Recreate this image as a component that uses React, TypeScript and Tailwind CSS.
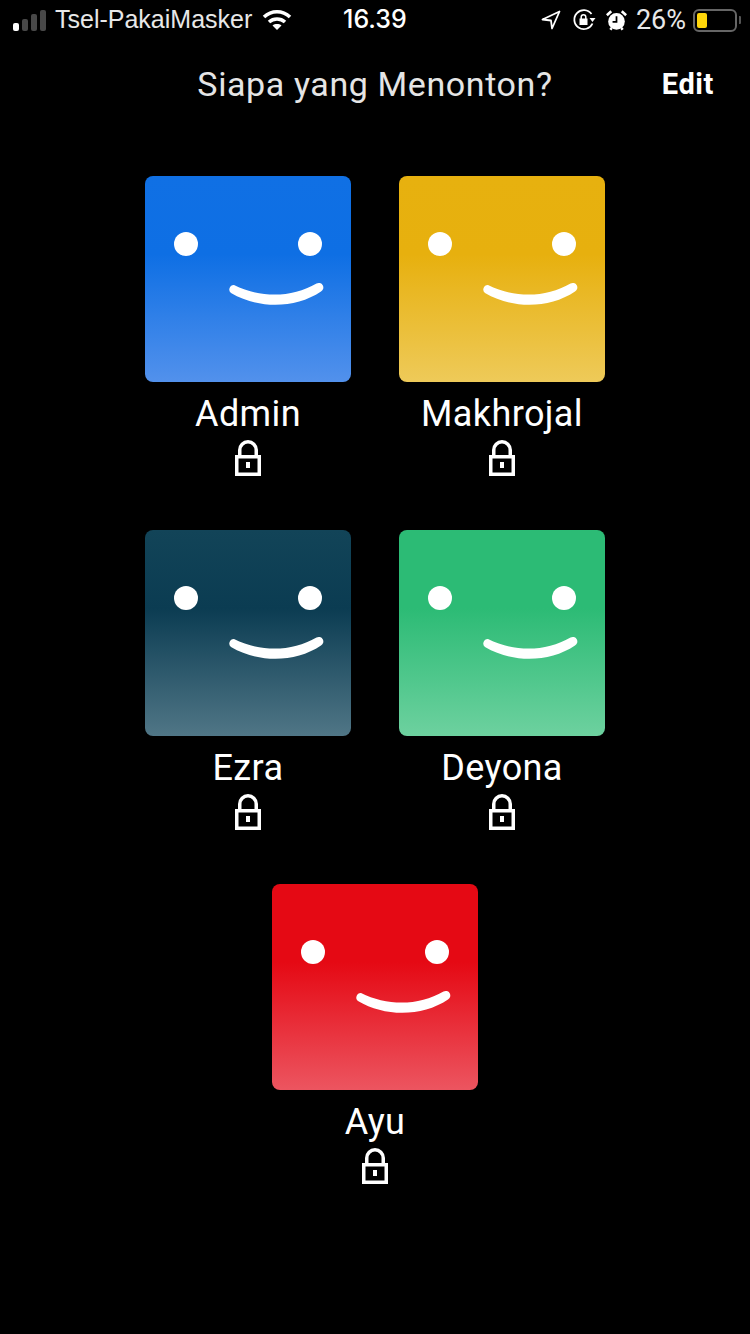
import React from 'react';

const Smile: React.FC = () => (
  <svg viewBox="0 0 206 206" className="w-full h-full">
    <circle cx="41" cy="68" r="12" fill="#fff" />
    <circle cx="165" cy="68" r="12" fill="#fff" />
    <path d="M89 109 C115 122 147 122 171.500 107.500 A4.500 4.500 0 0 1 176 115.500 C150 133 113 133 86 117 A4.500 4.500 0 0 1 89 109 Z" fill="#fff" />
  </svg>
);

const Lock: React.FC = () => (
  <svg viewBox="0 0 26 36" className="w-[26px] h-[36px]" fill="none" stroke="#fff" strokeWidth="3.5">
    <rect x="1.75" y="16.75" width="22.5" height="17.5" />
    <path d="M4.75 16 V10 a8.25 8.25 0 0 1 16.5 0 V16" />
    <rect x="11" y="22" width="4" height="6" fill="#fff" stroke="none" />
  </svg>
);

interface ProfileProps {
  name: string;
  gradient: string;
}

const Profile: React.FC<ProfileProps> = ({ name, gradient }) => (
  <div className="w-[206px] flex flex-col items-center">
    <div className={`w-[206px] h-[206px] rounded-[8px] overflow-hidden ${gradient}`}>
      <Smile />
    </div>
    <div className="mt-[12px] h-[40px] leading-[40px] text-[36px] tracking-[0.4px] text-white font-['Roboto',sans-serif] whitespace-nowrap">
      {name}
    </div>
    <div className="mt-[6px] h-[36px]">
      <Lock />
    </div>
  </div>
);

const StatusBar: React.FC = () => (
  <div className="h-[40px] flex items-center pl-[13px] text-[#e8e8e8] font-['Liberation_Sans',sans-serif] text-[25px]">
    <div className="flex items-center w-[330px]">
      <div className="flex items-end gap-[3px] h-[21px]">
        <span className="w-[6px] h-[8px] rounded-[2px] bg-white" />
        <span className="w-[6px] h-[12px] rounded-[2px] bg-[#484848]" />
        <span className="w-[6px] h-[17px] rounded-[2px] bg-[#484848]" />
        <span className="w-[6px] h-[21px] rounded-[2px] bg-[#484848]" />
      </div>
      <span className="ml-[9px] whitespace-nowrap">Tsel-PakaiMasker</span>
      <svg viewBox="0 0 30 22" className="ml-[10px] w-[30px] h-[22px] shrink-0" fill="none" stroke="#fff" strokeWidth="3.6">
        <path d="M2 8 C9.5 1 20.5 1 28 8" />
        <path d="M7 13 C11.5 9 18.5 9 23 13" />
        <path d="M15 21 L10.5 16.5 C13 14.6 17 14.6 19.5 16.5 Z" fill="#fff" stroke="none" />
      </svg>
    </div>
    <span className="text-white font-['Inter',sans-serif] text-[25px] font-medium">16.39</span>
    <div className="flex-1 flex items-center justify-end pr-[9px]">
      <svg viewBox="0 0 20 20" className="w-[20px] h-[20px]" fill="none" stroke="#fff" strokeWidth="1.8" strokeLinejoin="round">
        <path d="M18.5 1.5 L1.5 9.5 L10 10.5 L11 18.5 Z" />
      </svg>
      <svg viewBox="0 0 24 24" className="ml-[11px] w-[24px] h-[24px]" fill="none" stroke="#fff" strokeWidth="1.8">
        <path d="M20.5 15.5 A9.5 9.5 0 1 1 19.5 6" />
        <path d="M23.5 10 L17.5 10 L20.5 14 Z" fill="#fff" stroke="none" />
        <rect x="7.5" y="10.5" width="8" height="6.5" fill="#fff" stroke="none" />
        <path d="M9.2 11 V9 a2.3 2.3 0 0 1 4.6 0 V11" strokeWidth="1.5" />
      </svg>
      <svg viewBox="0 0 24 24" className="ml-[10px] w-[21px] h-[21px]">
        <circle cx="12" cy="13" r="9.5" fill="#fff" />
        <path d="M12 7 V13.5 H7.5" fill="none" stroke="#000" strokeWidth="2" />
        <path d="M1 6 L6 1.5 M23 6 L18 1.5 M5 22.5 L6.5 20.5 M19 22.5 L17.5 20.5" stroke="#fff" strokeWidth="3" />
      </svg>
      <span className="ml-[9px] mr-[3px] font-['Roboto',sans-serif] text-[27px]">26%</span>
      <div className="ml-[4px] w-[44px] h-[23px] rounded-[6px] border-2 border-[#666] p-[2px] flex">
        <div className="w-[10px] rounded-[2px] bg-[#ffd60a]" />
      </div>
      <div className="ml-[2px] w-[2px] h-[8px] rounded-r-[1px] bg-[#555]" />
    </div>
  </div>
);

export default function App() {
  return (
    <div className="w-[750px] h-[1334px] bg-black overflow-hidden">
      <StatusBar />
      <div className="relative h-[90px] flex items-center justify-center">
        <h1 className="font-normal text-[34px] leading-[40px] mb-[2px] tracking-[0.6px] text-[#e5e5e5] font-['Roboto',sans-serif]">Siapa yang Menonton?</h1>
        <span className="absolute right-[36px] text-[29px] tracking-[0.6px] font-bold text-white font-['Roboto',sans-serif]">Edit</span>
      </div>
      <div className="mt-[46px] flex flex-col items-center gap-[54px]">
        <div className="flex gap-[48px]">
          <Profile name="Admin" gradient="bg-[linear-gradient(#1070e4_0%,#0e6fe4_38%,#5291ec_100%)]" />
          <Profile name="Makhrojal" gradient="bg-[linear-gradient(#e7b10f_0%,#e7b00e_38%,#eeca59_100%)]" />
        </div>
        <div className="flex gap-[48px]">
          <Profile name="Ezra" gradient="bg-[linear-gradient(#124458_0%,#0b3c52_38%,#507686_100%)]" />
          <Profile name="Deyona" gradient="bg-[linear-gradient(#2cbb75_0%,#2cbb75_38%,#6dd19f_100%)]" />
        </div>
        <Profile name="Ayu" gradient="bg-[linear-gradient(#e50914_0%,#e50914_38%,#ec5560_100%)]" />
      </div>
    </div>
  );
}
